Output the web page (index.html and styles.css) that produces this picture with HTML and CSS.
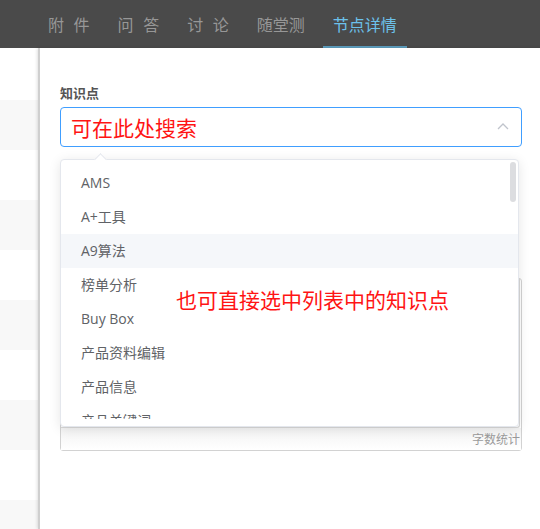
FILE: index.html
```html
<!DOCTYPE html>
<html lang="zh">
<head>
<meta charset="utf-8">
<link rel="stylesheet" href="styles.css">
</head>
<body>
<header class="topbar">
  <nav class="tabs">
    <span class="tab">附 件</span>
    <span class="tab">问 答</span>
    <span class="tab">讨 论</span>
    <span class="tab">随堂测</span>
    <span class="tab active">节点详情</span>
  </nav>
</header>
<div class="main">
  <ul class="side-list">
    <li></li><li></li><li></li><li></li><li></li><li></li><li></li><li></li><li></li><li></li>
  </ul>
  <section class="panel">
    <div class="form-item">
      <div class="label">知识点</div>
      <div class="select">
        <div class="input">
          <span class="placeholder">可在此处搜索</span>
          <svg class="chevron" width="12" height="8" viewBox="0 0 12 8"><polyline points="1,7 6,2 11,7" fill="none" stroke="#c0c4cc" stroke-width="1.3"/></svg>
        </div>
        <div class="dropdown">
          <div class="wrap">
            <ul class="options">
              <li>AMS</li>
              <li>A+工具</li>
              <li class="hover">A9算法</li>
              <li>榜单分析</li>
              <li>Buy Box</li>
              <li>产品资料编辑</li>
              <li>产品信息</li>
              <li>产品关键词</li>
            </ul>
          </div>
          <div class="thumb"></div>
        </div>
      </div>
    </div>
    <div class="editor">
      <div class="editor-body"></div>
      <div class="editor-foot">字数统计</div>
    </div>
    <div class="annotation">也可直接选中列表中的知识点</div>
  </section>
</div>
</body>
</html>
```
FILE: styles.css
```css
* { box-sizing: border-box; }
html, body { margin: 0; padding: 0; }
body {
  width: 540px;
  height: 529px;
  overflow: hidden;
  background: #fff;
  font-family: "Open Sans", "Noto Sans CJK SC", sans-serif;
}
.topbar {
  height: 48px;
  background: #4a4a4a;
}
.tabs {
  display: flex;
  gap: 8px;
  padding-left: 38px;
  height: 48px;
}
.tab {
  height: 48px;
  padding: 2px 10px 0;
  line-height: 44px;
  font-size: 16px;
  font-family: "Noto Sans CJK SC", sans-serif;
  color: #979797;
  word-spacing: 6px;
  border-bottom: 2px solid transparent;
}
.tab.active {
  color: #6cc1ea;
  border-bottom-color: #5b9cbc;
}
.main {
  display: flex;
  height: 481px;
}
.side-list {
  list-style: none;
  margin: 0;
  padding: 2px 0 0;
  width: 38px;
  flex: none;
}
.side-list li { height: 50px; }
.side-list li:nth-child(even) { background: #f8f8f8; }
.panel {
  position: relative;
  flex: 1;
  border-left: 2px solid #cfcfcf;
  box-shadow: -1px 0 3px rgba(0,0,0,0.12);
  padding: 36px 20px 0 20px;
  background: #fff;
}
.label {
  font-family: "Noto Sans CJK SC", sans-serif;
  font-size: 13px;
  font-weight: bold;
  line-height: 18px;
  color: #555;
  margin-bottom: 5px;
}
.select { position: relative; }
.input {
  height: 40px;
  border: 1px solid #409eff;
  border-radius: 4px;
  display: flex;
  align-items: center;
  justify-content: space-between;
  padding: 0 12px 0 10px;
}
.placeholder {
  font-family: "Noto Sans CJK SC", sans-serif;
  font-size: 21px;
  line-height: 24px;
  color: #ff1414;
}
.chevron { margin-top: -2px; }
.dropdown {
  position: absolute;
  z-index: 2;
  top: 52px;
  left: 0;
  width: 459px;
  background: #fff;
  border: 1px solid #e4e7ed;
  border-radius: 4px;
  box-shadow: 0 2px 12px rgba(0,0,0,0.1);
  padding-bottom: 7px;
}
.dropdown::before {
  content: "";
  position: absolute;
  top: -5px;
  left: 35px;
  width: 8px;
  height: 8px;
  background: #fff;
  border-top: 1px solid #e4e7ed;
  border-left: 1px solid #e4e7ed;
  transform: rotate(45deg);
}
.wrap {
  height: 259px;
  overflow: hidden;
}
.options {
  list-style: none;
  margin: 0;
  padding: 6px 0 0;
}
.options li {
  height: 34px;
  line-height: 34px;
  padding-left: 20px;
  font-size: 14px;
  color: #606266;
}
.options li.hover { background: #f5f7fa; }
.thumb {
  position: absolute;
  top: 2px;
  right: 2px;
  width: 6px;
  height: 40px;
  border-radius: 3px;
  background: #dcdde0;
}
.editor {
  margin-top: 131px;
  width: 462px;
  height: 173px;
  border: 1px solid #d2d2d2;
  border-radius: 3px;
  display: flex;
  flex-direction: column;
}
.editor-body {
  height: 149px;
  margin-right: 1px;
  border-right: 1px solid #d8d8d8;
  border-bottom: 1px solid #d8d8d8;
  border-bottom-right-radius: 3px;
}
.editor-foot {
  flex: 1;
  background: linear-gradient(#f3f3f3, #fff);
  text-align: right;
  font-family: "Noto Sans CJK SC", sans-serif;
  font-size: 12px;
  line-height: 22px;
  color: #9a9a9a;
  padding-right: 1px;
}
.annotation {
  position: absolute;
  z-index: 3;
  left: 136px;
  top: 240px;
  font-family: "Noto Sans CJK SC", sans-serif;
  font-size: 21px;
  line-height: 22px;
  color: #ff1414;
  white-space: nowrap;
}
```
